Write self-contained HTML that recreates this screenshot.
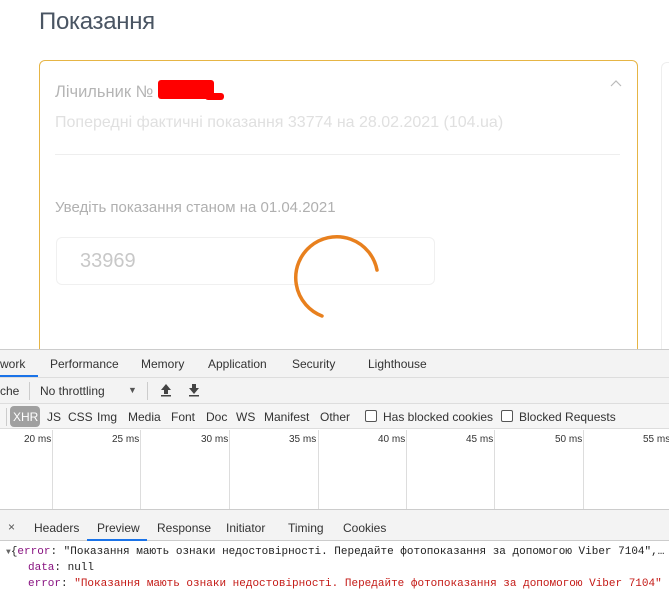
<!DOCTYPE html>
<html><head><meta charset="utf-8"><style>
*{margin:0;padding:0;box-sizing:border-box}
body{width:669px;height:597px;overflow:hidden;background:#fff;font-family:"Liberation Sans","Noto Sans CJK SC",sans-serif;position:relative}
.a{position:absolute;white-space:nowrap}
.dt{font-size:12px;color:#333}
.mono{font-family:"Liberation Mono","DejaVu Sans Mono",monospace;font-size:11px}
</style></head><body>
<div class="a" style="left:39px;top:8px;font-size:24px;color:#4a5563;letter-spacing:-0.3px">Показання</div>
<div class="a" style="left:39px;top:60px;width:599px;height:320px;border:1.5px solid #e6b545;border-radius:6px"></div>
<div class="a" style="left:661px;top:62px;width:20px;height:300px;border:1px solid #eee;border-radius:6px"></div>
<div class="a" style="left:55px;top:83px;font-size:16.5px;color:#b5b5b5">Лічильник №</div>
<div class="a" style="left:158px;top:80px;width:56px;height:19px;background:#f00;border-radius:3px"></div>
<div class="a" style="left:205px;top:93px;width:19px;height:7px;background:#f00;border-radius:3px"></div>
<svg class="a" style="left:610px;top:79px" width="12" height="8"><path d="M1 7L6 2L11 7" fill="none" stroke="#bbb" stroke-width="1.2"/></svg>
<div class="a" style="left:55px;top:114px;font-size:16px;color:#e0e0e0">Попередні фактичні показання 33774 на 28.02.2021 (104.ua)</div>
<div class="a" style="left:55px;top:154px;width:565px;height:1px;background:#eee"></div>
<div class="a" style="left:55px;top:199px;font-size:15px;color:#b0b0b0">Уведіть показання станом на 01.04.2021</div>
<div class="a" style="left:56px;top:237px;width:379px;height:48px;border:1px solid #f0f0f0;border-radius:6px"></div>
<div class="a" style="left:80px;top:250px;font-size:20px;color:#c8c8c8">33969</div>
<svg class="a" style="left:290px;top:230px" width="100" height="100"><path d="M 87 40 A 41 41 0 1 0 32 86" fill="none" stroke="#e8801e" stroke-width="3.5" stroke-linecap="round"/></svg>

<div class="a" style="left:0;top:349px;width:669px;height:248px;background:#fff;border-top:1px solid #ccc"></div>
<div class="a" style="left:0;top:350px;width:669px;height:28px;background:#f3f3f3;border-bottom:1px solid #ddd"></div>
<div class="a dt" style="left:0;top:357px">work</div>
<div class="a" style="left:0;top:375px;width:38px;height:2px;background:#1a73e8"></div>
<div class="a dt" style="left:50px;top:357px">Performance</div>
<div class="a dt" style="left:141px;top:357px">Memory</div>
<div class="a dt" style="left:208px;top:357px">Application</div>
<div class="a dt" style="left:292px;top:357px">Security</div>
<div class="a dt" style="left:368px;top:357px">Lighthouse</div>
<div class="a" style="left:0;top:378px;width:669px;height:26px;background:#f3f3f3;border-bottom:1px solid #ddd"></div>
<div class="a dt" style="left:0;top:384px">che</div>
<div class="a" style="left:29px;top:382px;width:1px;height:18px;background:#ccc"></div>
<div class="a dt" style="left:40px;top:384px">No throttling</div>
<div class="a" style="left:128px;top:385px;font-size:9px;color:#555">▼</div>
<div class="a" style="left:147px;top:382px;width:1px;height:18px;background:#ccc"></div>
<svg class="a" style="left:160px;top:383px" width="12" height="14"><path d="M6 1L11 7H8V11H4V7H1Z" fill="#444"/><rect x="1" y="12" width="10" height="1.5" fill="#444"/></svg>
<svg class="a" style="left:188px;top:383px" width="12" height="14"><path d="M6 11L11 5H8V1H4V5H1Z" fill="#444"/><rect x="1" y="12" width="10" height="1.5" fill="#444"/></svg>
<div class="a" style="left:0;top:404px;width:669px;height:25px;background:#f5f5f5;border-bottom:1px solid #ddd"></div>
<div class="a" style="left:6px;top:408px;width:1px;height:18px;background:#ccc"></div>
<div class="a" style="left:10px;top:406px;width:30px;height:21px;background:#a0a0a0;border-radius:4px"></div>
<div class="a dt" style="left:13px;top:410px;color:#fff">XHR</div>
<div class="a dt" style="left:47px;top:410px">JS</div>
<div class="a dt" style="left:68px;top:410px">CSS</div>
<div class="a dt" style="left:97px;top:410px">Img</div>
<div class="a dt" style="left:128px;top:410px">Media</div>
<div class="a dt" style="left:171px;top:410px">Font</div>
<div class="a dt" style="left:206px;top:410px">Doc</div>
<div class="a dt" style="left:236px;top:410px">WS</div>
<div class="a dt" style="left:264px;top:410px">Manifest</div>
<div class="a dt" style="left:320px;top:410px">Other</div>
<div class="a" style="left:365px;top:410px;width:12px;height:12px;border:1px solid #555;border-radius:2px;background:#fff"></div>
<div class="a dt" style="left:383px;top:410px">Has blocked cookies</div>
<div class="a" style="left:501px;top:410px;width:12px;height:12px;border:1px solid #555;border-radius:2px;background:#fff"></div>
<div class="a dt" style="left:519px;top:410px">Blocked Requests</div>
<div class="a" style="left:52px;top:430px;width:1px;height:79px;background:#ddd"></div>
<div class="a" style="left:140px;top:430px;width:1px;height:79px;background:#ddd"></div>
<div class="a" style="left:229px;top:430px;width:1px;height:79px;background:#ddd"></div>
<div class="a" style="left:318px;top:430px;width:1px;height:79px;background:#ddd"></div>
<div class="a" style="left:406px;top:430px;width:1px;height:79px;background:#ddd"></div>
<div class="a" style="left:494px;top:430px;width:1px;height:79px;background:#ddd"></div>
<div class="a" style="left:583px;top:430px;width:1px;height:79px;background:#ddd"></div>
<div class="a" style="left:24px;top:434px;font-size:10px;color:#333">20 ms</div>
<div class="a" style="left:112px;top:434px;font-size:10px;color:#333">25 ms</div>
<div class="a" style="left:201px;top:434px;font-size:10px;color:#333">30 ms</div>
<div class="a" style="left:289px;top:434px;font-size:10px;color:#333">35 ms</div>
<div class="a" style="left:378px;top:434px;font-size:10px;color:#333">40 ms</div>
<div class="a" style="left:466px;top:434px;font-size:10px;color:#333">45 ms</div>
<div class="a" style="left:555px;top:434px;font-size:10px;color:#333">50 ms</div>
<div class="a" style="left:643px;top:434px;font-size:10px;color:#333">55 ms</div>
<div class="a" style="left:0;top:509px;width:669px;height:1px;background:#ccc"></div>
<div class="a" style="left:0;top:510px;width:669px;height:31px;background:#f3f3f3;border-bottom:1px solid #ccc"></div>
<div class="a dt" style="left:8px;top:520px;color:#555">×</div>
<div class="a dt" style="left:34px;top:521px">Headers</div>
<div class="a dt" style="left:97px;top:521px">Preview</div>
<div class="a" style="left:87px;top:539px;width:60px;height:2px;background:#1a73e8"></div>
<div class="a dt" style="left:157px;top:521px">Response</div>
<div class="a dt" style="left:226px;top:521px">Initiator</div>
<div class="a dt" style="left:288px;top:521px">Timing</div>
<div class="a dt" style="left:343px;top:521px">Cookies</div>
<div class="a mono" style="left:6px;top:546px;color:#222"><span style="font-size:8px;color:#666">▼</span>{<span style="color:#881280">error</span>: <span style="color:#222">"Показання мають ознаки недостовірності. Передайте фотопоказання за допомогою Viber 7104",…</span></div>
<div class="a mono" style="left:28px;top:562px;color:#222"><span style="color:#881280">data</span>: null</div>
<div class="a mono" style="left:28px;top:578px;color:#222"><span style="color:#881280">error</span>: <span style="color:#c41a16">"Показання мають ознаки недостовірності. Передайте фотопоказання за допомогою Viber 7104"</span></div>
</body></html>
